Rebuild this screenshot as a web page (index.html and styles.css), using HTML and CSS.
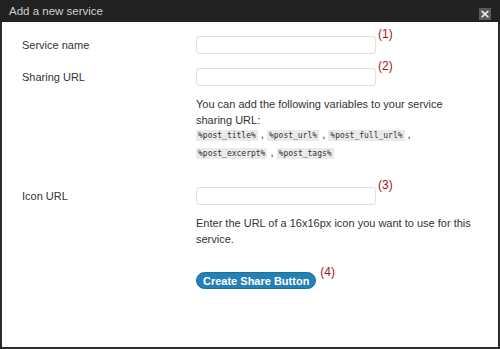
FILE: index.html
```html
<!DOCTYPE html>
<html lang="en">
<head>
  <meta charset="UTF-8">
  <title>Add a new service</title>
  <link rel="stylesheet" href="styles.css">
</head>
<body>
  <div class="dialog">
    <div class="titlebar">
      <span class="title">Add a new service</span>
      <span class="close">&times;</span>
    </div>

    <div class="content">
      <!-- Service name -->
      <div class="row">
        <label for="serviceName">Service name</label>
        <div class="field">
          <div class="input-line">
            <input type="text" id="serviceName">
            <span class="marker">(1)</span>
          </div>
        </div>
      </div>

      <!-- Sharing URL -->
      <div class="row">
        <label for="sharingUrl">Sharing URL</label>
        <div class="field">
          <div class="input-line">
            <input type="text" id="sharingUrl">
            <span class="marker">(2)</span>
          </div>
          <p class="help">You can add the following variables to your service sharing URL:</p>
          <p class="vars">
            <code>%post_title%</code> , <code>%post_url%</code> , <code>%post_full_url%</code> ,
            <code>%post_excerpt%</code> , <code>%post_tags%</code>
          </p>
        </div>
      </div>

      <!-- Icon URL -->
      <div class="row row-icon">
        <label for="iconUrl">Icon URL</label>
        <div class="field">
          <div class="input-line">
            <input type="text" id="iconUrl">
            <span class="marker">(3)</span>
          </div>
          <p class="help">Enter the URL of a 16x16px icon you want to use for this service.</p>
        </div>
      </div>

      <div class="row row-submit">
        <span></span>
        <div class="field">
          <div class="input-line">
            <button type="button" class="create-btn">Create Share Button</button>
            <span class="marker marker-btn">(4)</span>
          </div>
        </div>
      </div>
    </div>
  </div>
</body>
</html>
```

FILE: styles.css
```css
/* Page */
body {
  margin: 0;
  padding: 0;
  font-family: "Liberation Sans", Arial, sans-serif;
  font-size: 11px;
  color: #333;
  background-color: #fff;
}

.dialog {
  width: 500px;
  height: 349px;
  box-sizing: border-box;
  border: 2px solid #2b2b2b;
  border-top: none;
  background-color: #fff;
}

/* Title bar */
.titlebar {
  height: 22px;
  margin: 0 -2px;
  padding: 0 9px 0 9px;
  background-color: #222;
  color: #cfcfcf;
  font-size: 11.5px;
  display: flex;
  align-items: center;
  justify-content: space-between;
}

.close {
  width: 12px;
  height: 12px;
  margin-top: 5px;
  background-color: #5a5a5a;
  color: #eee;
  font-family: "DejaVu Sans", sans-serif;
  font-size: 13px;
  font-weight: bold;
  line-height: 12px;
  text-align: center;
}

/* Form rows */
.content {
  padding: 14px 0 0 20px;
}

.row {
  display: grid;
  grid-template-columns: 174px 1fr;
  margin-bottom: 14px;
}

.row label {
  padding-top: 3px;
  color: #333;
}

.input-line {
  display: flex;
  align-items: flex-start;
}

input {
  width: 180px;
  height: 18px;
  box-sizing: border-box;
  border: 1px solid #e0e0e0;
  border-radius: 3px;
  background-color: #fff;
  padding: 0 4px;
}

.marker {
  margin-top: -9px;
  margin-left: 2px;
  color: #a31515;
  font-size: 12px;
}

.marker-btn {
  margin-top: -7px;
  margin-left: 4px;
}

.help {
  margin: 10px 0 0 0;
  width: 284px;
  line-height: 16px;
}

.vars {
  margin: -3px 0 0 0;
  width: 250px;
  line-height: 18px;
  font-size: 11px;
}

code {
  font-family: "DejaVu Sans Mono", monospace;
  font-size: 8px;
  line-height: 1;
  background-color: #eaeaea;
  padding: 1px 2px;
}

.row-icon {
  margin-top: 26px;
}

.row-submit {
  margin-top: 25px;
}

.create-btn {
  height: 17px;
  padding: 0 6px;
  border: 1px solid #1d6f9c;
  border-radius: 9px;
  background-color: #2581b5;
  color: #fff;
  font-family: "Liberation Sans", Arial, sans-serif;
  font-size: 11px;
  font-weight: bold;
  line-height: 14px;
  cursor: pointer;
}
```
